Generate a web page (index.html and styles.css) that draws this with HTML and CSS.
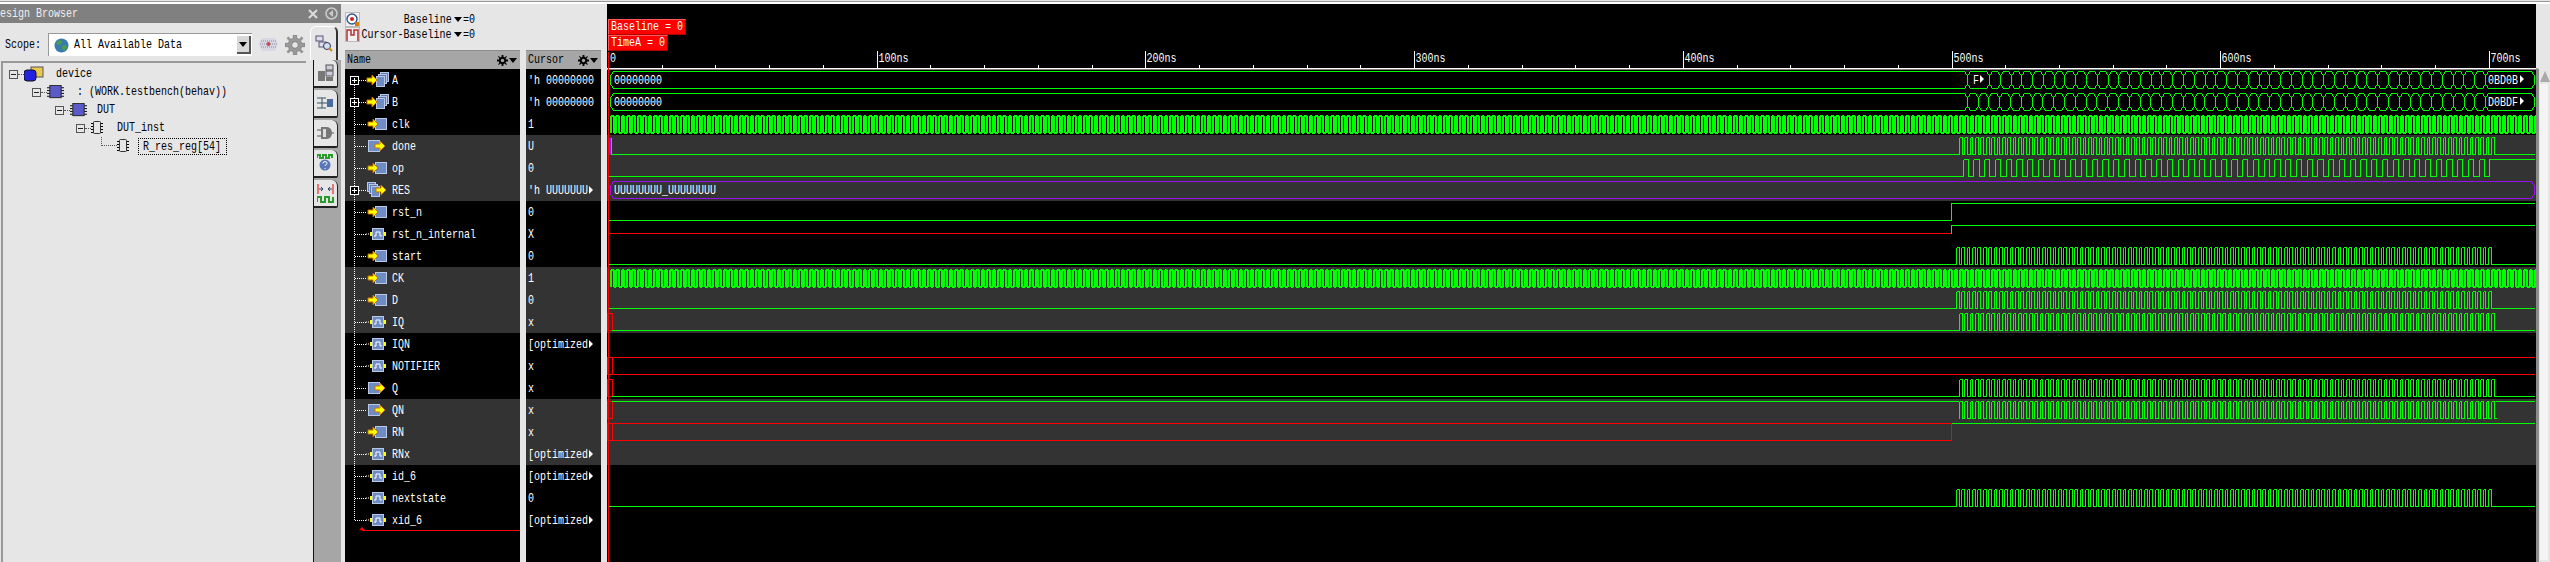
FILE: index.html
```html
<!DOCTYPE html>
<html lang="en">
<head>
    <meta charset="UTF-8">
    <title>Waveform viewer</title>
    <link rel="stylesheet" href="styles.css">
</head>
<body>
    <!-- Shared icons -->
    <svg class="defs" width="0" height="0">
        <symbol id="i-in" viewBox="0 0 24 16">
            <rect x="9.5" y="2.5" width="11" height="11" fill="#6f8cc4" stroke="#b9c8e6"/>
            <path d="M2 6h5V3l5 5-5 5v-3H2z" fill="#ff0" stroke="#c87000"/>
        </symbol>
        <symbol id="i-out" viewBox="0 0 24 16">
            <rect x="2.5" y="2.5" width="11" height="11" fill="#6f8cc4" stroke="#b9c8e6"/>
            <path d="M9 6h5V3l5 5-5 5v-3H9z" fill="#ff0" stroke="#c87000"/>
        </symbol>
        <symbol id="i-bus-in" viewBox="0 0 24 16">
            <rect x="14.5" y=".5" width="8" height="9" fill="#5d78ac" stroke="#b9c8e6"/>
            <rect x="12.5" y="2.5" width="8" height="9" fill="#5d78ac" stroke="#b9c8e6"/>
            <rect x="10.5" y="4.5" width="8" height="10" fill="#6f8cc4" stroke="#b9c8e6"/>
            <path d="M1 6h5V3l5 5-5 5v-3H1z" fill="#ff0" stroke="#c87000"/>
        </symbol>
        <symbol id="i-bus-out" viewBox="0 0 24 16">
            <rect x="1.5" y=".5" width="8" height="9" fill="#5d78ac" stroke="#b9c8e6"/>
            <rect x="3.5" y="2.5" width="8" height="9" fill="#5d78ac" stroke="#b9c8e6"/>
            <rect x="5.5" y="4.5" width="8" height="10" fill="#6f8cc4" stroke="#b9c8e6"/>
            <path d="M10 6h5V3l5 5-5 5v-3h-5z" fill="#ff0" stroke="#c87000"/>
        </symbol>
        <symbol id="i-net" viewBox="0 0 24 16">
            <path d="M0 8h4" stroke="#fff" stroke-dasharray="1 1"/>
            <rect x="4" y="6" width="2" height="4" fill="#ff0"/>
            <rect x="18" y="6" width="2" height="4" fill="#ff0"/>
            <rect x="6.5" y="2.5" width="11" height="11" fill="#6f8cc4" stroke="#b9c8e6"/>
            <path d="M8 10h2V6h4v4h2" fill="none" stroke="#fff"/>
        </symbol>
        <symbol id="i-gear" viewBox="0 0 12 12">
            <path d="M5 0h2v2l1.500.6L10 1.200 10.800 2 9.400 3.500 10 5h2v2h-2l-.6 1.500L10.800 10l-.8.800-1.500-1.400L7 10v2H5v-2l-1.500-.6L2 10.800 1.200 10l1.400-1.500L2 7H0V5h2l.6-1.500L1.200 2 2 1.200l1.500 1.400L5 2z" fill="#000"/>
            <circle cx="6" cy="6" r="1.800" fill="#a6a6a6"/>
        </symbol>
        <symbol id="i-chip" viewBox="0 0 18 14">
            <path d="M0 2.500h18M0 5.500h18M0 8.500h18M0 11.500h18" stroke="#000"/>
            <rect x="3" y="0" width="12" height="13" fill="#5a5ac8" stroke="#222"/>
        </symbol>
        <symbol id="i-inst" viewBox="0 0 12 14">
            <path d="M0 2.500h12M0 5.500h12M0 8.500h12M0 11.500h12" stroke="#000"/>
            <rect x="2.500" y=".5" width="7" height="12" rx="1" fill="#e6e6e6" stroke="#333"/>
        </symbol>
    </svg>

    <div class="top-strip"></div>

    <div class="app">
        <!-- Design browser -->
        <section class="browser">
            <header class="title-bar">
                <span class="t">esign Browser</span>
                <span class="title-btns">
                    <svg width="12" height="12" viewBox="0 0 12 12"><path d="M2 2l8 8M10 2l-8 8" stroke="#ddd" stroke-width="2"/></svg>
                    <svg width="13" height="13" viewBox="0 0 13 13"><circle cx="6.500" cy="6.500" r="5.500" fill="none" stroke="#ccc" stroke-width="1.500"/><path d="M8 3v7L4 6.500z" fill="#ccc"/></svg>
                </span>
            </header>
            <div class="browser-body">
                <div class="browser-main">
                    <div class="scope-row">
                        <span class="t scope-label">Scope:</span>
                        <div class="scope-select">
                            <svg width="15" height="15" viewBox="0 0 15 15"><circle cx="7.500" cy="7.500" r="7" fill="#3a7ab0"/><path d="M2 5l3-3 3 1-1 3-3 1zM8 8l4-1 1 3-3 3-2-2z" fill="#4aa04a"/></svg>
                            <span class="t select-text">All Available Data</span>
                            <span class="select-btn"><i class="caret"></i></span>
                        </div>
                        <svg class="scope-icon" width="19" height="15" viewBox="0 0 19 15"><path d="M3 1h13l3 6-3 7H3L0 7z" fill="#d8d8e4"/><path d="M2 4h15M1 7h17M2 10h15" stroke="#8a8aa0" stroke-dasharray="1 1"/><circle cx="9.500" cy="7" r="2" fill="#c84a4a"/></svg>
                        <svg class="scope-icon" width="20" height="20" viewBox="0 0 12 12"><path d="M5 0h2v2l1.500.6L10 1.200 10.800 2 9.400 3.500 10 5h2v2h-2l-.6 1.500L10.800 10l-.8.800-1.500-1.400L7 10v2H5v-2l-1.500-.6L2 10.800 1.200 10l1.400-1.500L2 7H0V5h2l.6-1.500L1.200 2 2 1.200l1.500 1.400L5 2z" fill="#999" stroke="#777" stroke-width=".4"/><circle cx="6" cy="6" r="2" fill="#e6e6e6" stroke="#777" stroke-width=".5"/></svg>
                    </div>
                    <div class="tree">
                        <div class="tree-row depth-0">
                            <i class="minus"></i><i class="twig"></i>
                            <svg class="node-icon drop" width="20" height="16" viewBox="0 0 20 16"><rect x="7" y="1" width="12" height="10" fill="#e8c850" stroke="#555"/><rect x="0" y="4" width="12" height="11" rx="3" fill="#2222e0" stroke="#111"/></svg>
                            <span class="t node-text device-text">device</span>
                        </div>
                        <div class="tree-row depth-1">
                            <i class="minus"></i><i class="twig"></i>
                            <svg class="node-icon" width="17" height="14"><use href="#i-chip"/></svg>
                            <span class="t node-text top-text">:  (WORK.testbench(behav))</span>
                        </div>
                        <div class="tree-row depth-2">
                            <i class="minus"></i><i class="twig"></i>
                            <svg class="node-icon" width="17" height="14"><use href="#i-chip"/></svg>
                            <span class="t node-text">DUT</span>
                        </div>
                        <div class="tree-row depth-3">
                            <i class="minus"></i><i class="twig"></i>
                            <svg class="node-icon" width="12" height="14"><use href="#i-inst"/></svg>
                            <span class="t node-text inst-text">DUT_inst</span>
                        </div>
                        <div class="tree-row depth-4">
                            <i class="twig twig-leaf"></i>
                            <svg class="node-icon" width="12" height="14"><use href="#i-inst"/></svg>
                            <span class="selected"><span class="t node-text">R_res_reg[54]</span></span>
                        </div>
                    </div>
                </div>
                <nav class="tabs">
                    <div class="tab-active">
                        <svg width="18" height="18" viewBox="0 0 18 18"><rect x="1" y="1" width="7" height="5" fill="#dde" stroke="#557"/><rect x="4" y="7" width="7" height="5" fill="#dde" stroke="#557"/><circle cx="12" cy="11" r="3.500" fill="#cfe0f0" stroke="#335"/><path d="M14 13l3 3" stroke="#c80" stroke-width="2"/></svg>
                    </div>
                    <div class="tab-list">
                        <div class="tab"><svg width="17" height="18" viewBox="0 0 17 18"><rect x="9" y="1" width="7" height="5" fill="#ccd" stroke="#555"/><rect x="9" y="7" width="7" height="5" fill="#ccd" stroke="#555"/><rect x="1" y="7" width="7" height="10" fill="#777"/><rect x="9" y="13" width="7" height="4" fill="#777"/></svg></div>
                        <div class="tab"><svg width="17" height="16" viewBox="0 0 17 16"><path d="M0 3h9M0 8h11M0 13h9M5 3v10" stroke="#356" fill="none"/><rect x="10" y="4" width="6" height="8" fill="#4a6aa0"/></svg></div>
                        <div class="tab"><svg width="17" height="14" viewBox="0 0 17 14"><path d="M0 4h4M0 10h4M14 7h3" stroke="#555"/><path d="M4 1h6a5 6 0 010 12H4z" fill="#777"/><rect x="6" y="3" width="3" height="8" fill="#ddd"/></svg></div>
                        <div class="tab"><svg width="17" height="18" viewBox="0 0 17 18"><path d="M0 4V1h3v3h3V1h3v3h3V1h3v3" fill="none" stroke="#2a9a2a" stroke-width="2"/><circle cx="8" cy="11" r="5.500" fill="#5a78b8"/><path d="M6 9.500a2 2 0 114 0c0 1.500-2 1-2 2.500M8 14v1" fill="none" stroke="#fff"/></svg></div>
                        <div class="tab"><svg width="17" height="20" viewBox="0 0 17 20"><path d="M1 1v10M16 1v10" stroke="#e00"/><path d="M2 6h4M4 4l2 2-2 2M15 6h-4M13 4l-2 2 2 2" fill="none" stroke="#246"/><path d="M0 19v-5h4v5h4v-5h4v5h4v-5" fill="none" stroke="#2a9a2a" stroke-width="2"/></svg></div>
                    </div>
                </nav>
            </div>
        </section>

        <!-- Signal list -->
        <section class="signals">
            <div class="time-info">
                <div class="info-row">
                    <span class="icon-btn"><svg width="13" height="13" viewBox="0 0 13 13"><circle cx="6" cy="6" r="5" fill="#fff" stroke="#3a5a90" stroke-width="1.500"/><circle cx="6" cy="6" r="2" fill="#d02020"/><rect x="9" y="9" width="4" height="4" fill="#d08000"/></svg></span>
                    <span class="info-label"><span class="t t-right">Baseline</span></span>
                    <i class="caret"></i>
                    <span class="t info-value">=0</span>
                </div>
                <div class="info-row">
                    <span class="icon-btn"><svg width="13" height="13" viewBox="0 0 13 13"><path d="M1 13V2h4v5h3V2h4v11" fill="none" stroke="#b03030" stroke-width="1.500"/></svg></span>
                    <span class="info-label"><span class="t t-right">Cursor-Baseline</span></span>
                    <i class="caret"></i>
                    <span class="t info-value">=0</span>
                </div>
            </div>
            <div class="columns">
                <div class="name-col">
                    <div class="col-head">
                        <span class="t">Name</span>
                        <span class="head-tools"><svg width="11" height="11"><use href="#i-gear"/></svg><i class="caret"></i></span>
                    </div>
                    <div class="name-rows">
                        <i class="guide"></i>
                        <div class="row"><i class="plus"></i><i class="twig-short"></i><svg class="sig" width="24" height="16"><use href="#i-bus-in"/></svg><span class="t">A</span></div>
                        <div class="row"><i class="plus"></i><i class="twig-short"></i><svg class="sig" width="24" height="16"><use href="#i-bus-in"/></svg><span class="t">B</span></div>
                        <div class="row"><i class="twig-long"></i><svg class="sig" width="24" height="16"><use href="#i-in"/></svg><span class="t">clk</span></div>
                        <div class="row dark"><i class="twig-long"></i><svg class="sig" width="24" height="16"><use href="#i-out"/></svg><span class="t">done</span></div>
                        <div class="row dark"><i class="twig-long"></i><svg class="sig" width="24" height="16"><use href="#i-in"/></svg><span class="t">op</span></div>
                        <div class="row dark"><i class="plus"></i><i class="twig-short"></i><svg class="sig" width="24" height="16"><use href="#i-bus-out"/></svg><span class="t">RES</span></div>
                        <div class="row"><i class="twig-long"></i><svg class="sig" width="24" height="16"><use href="#i-in"/></svg><span class="t">rst_n</span></div>
                        <div class="row"><i class="twig-long"></i><svg class="sig" width="24" height="16"><use href="#i-net"/></svg><span class="t">rst_n_internal</span></div>
                        <div class="row"><i class="twig-long"></i><svg class="sig" width="24" height="16"><use href="#i-in"/></svg><span class="t">start</span></div>
                        <div class="row dark"><i class="twig-long"></i><svg class="sig" width="24" height="16"><use href="#i-in"/></svg><span class="t">CK</span></div>
                        <div class="row dark"><i class="twig-long"></i><svg class="sig" width="24" height="16"><use href="#i-in"/></svg><span class="t">D</span></div>
                        <div class="row dark"><i class="twig-long"></i><svg class="sig" width="24" height="16"><use href="#i-net"/></svg><span class="t">IQ</span></div>
                        <div class="row"><i class="twig-long"></i><svg class="sig" width="24" height="16"><use href="#i-net"/></svg><span class="t">IQN</span></div>
                        <div class="row"><i class="twig-long"></i><svg class="sig" width="24" height="16"><use href="#i-net"/></svg><span class="t">NOTIFIER</span></div>
                        <div class="row"><i class="twig-long"></i><svg class="sig" width="24" height="16"><use href="#i-out"/></svg><span class="t">Q</span></div>
                        <div class="row dark"><i class="twig-long"></i><svg class="sig" width="24" height="16"><use href="#i-out"/></svg><span class="t">QN</span></div>
                        <div class="row dark"><i class="twig-long"></i><svg class="sig" width="24" height="16"><use href="#i-in"/></svg><span class="t">RN</span></div>
                        <div class="row dark"><i class="twig-long"></i><svg class="sig" width="24" height="16"><use href="#i-net"/></svg><span class="t">RNx</span></div>
                        <div class="row"><i class="twig-long"></i><svg class="sig" width="24" height="16"><use href="#i-net"/></svg><span class="t">id_6</span></div>
                        <div class="row"><i class="twig-long"></i><svg class="sig" width="24" height="16"><use href="#i-net"/></svg><span class="t">nextstate</span></div>
                        <div class="row"><i class="twig-long"></i><svg class="sig" width="24" height="16"><use href="#i-net"/></svg><span class="t">xid_6</span></div>
                        <i class="drop-line"></i>
                    </div>
                </div>
                <div class="val-col">
                    <div class="col-head">
                        <span class="t">Cursor</span>
                        <span class="head-tools"><svg width="11" height="11"><use href="#i-gear"/></svg><i class="caret"></i></span>
                    </div>
                    <div class="val-rows">
                        <div class="val"><span class="t">'h 00000000</span></div>
                        <div class="val"><span class="t">'h 00000000</span></div>
                        <div class="val"><span class="t">1</span></div>
                        <div class="val dark"><span class="t">U</span></div>
                        <div class="val dark"><span class="t">0</span></div>
                        <div class="val dark"><span class="t cut">'h UUUUUUU</span><i class="more"></i></div>
                        <div class="val"><span class="t">0</span></div>
                        <div class="val"><span class="t">X</span></div>
                        <div class="val"><span class="t">0</span></div>
                        <div class="val dark"><span class="t">1</span></div>
                        <div class="val dark"><span class="t">0</span></div>
                        <div class="val dark"><span class="t">x</span></div>
                        <div class="val"><span class="t cut">[optimized</span><i class="more"></i></div>
                        <div class="val"><span class="t">x</span></div>
                        <div class="val"><span class="t">x</span></div>
                        <div class="val dark"><span class="t">x</span></div>
                        <div class="val dark"><span class="t">x</span></div>
                        <div class="val dark"><span class="t cut">[optimized</span><i class="more"></i></div>
                        <div class="val"><span class="t cut">[optimized</span><i class="more"></i></div>
                        <div class="val"><span class="t">0</span></div>
                        <div class="val"><span class="t cut">[optimized</span><i class="more"></i></div>
                    </div>
                </div>
            </div>
        </section>

        <!-- Waveforms, drawn by script.js -->
        <section class="wave-pane">
            <svg id="wave" class="wave" width="1929" height="558" viewBox="607 4 1929 558"></svg>
            <div class="markers">
                <div class="marker"><span class="t">Baseline = 0</span></div>
                <div class="marker marker-a"><span class="t">TimeA = 0</span></div>
            </div>
        </section>

        <!-- Vertical scrollbar -->
        <aside class="scrollbar">
            <div class="scroll-btn"><i class="scroll-up"></i></div>
            <div class="scroll-thumb"></div>
        </aside>
    </div>

    <script src="script.js"></script>
</body>
</html>
```

FILE: styles.css
```css
/* General */
* {
    margin: 0;
    padding: 0;
    box-sizing: border-box;
}

body {
    width: 2550px;
    height: 562px;
    overflow: hidden;
    background: #e6e6e6;
    font-family: "Liberation Mono", monospace;
    font-size: 13.5px;
    color: #fff;
}

i {
    display: block;
    flex: none;
}

.defs {
    position: absolute;
}

/* The screen font is tall and narrow: 6px per character */
.t {
    display: inline-block;
    white-space: nowrap;
    line-height: 16px;
    transform: scaleX(0.74);
    transform-origin: 0 50%;
}

.t-right {
    transform-origin: 100% 50%;
}

.caret {
    width: 0;
    height: 0;
    border-left: 4px solid transparent;
    border-right: 4px solid transparent;
    border-top: 5px solid #000;
}

.top-strip {
    height: 4px;
    background: #fff;
    border-top: 1px solid #e6e6e6;
    box-shadow: inset 0 1px 0 #999;
}

.app {
    display: flex;
    height: 558px;
}

/* Design browser */
.browser {
    width: 341px;
    display: flex;
    flex-direction: column;
    flex: none;
    color: #000;
}

.title-bar {
    height: 19px;
    background: #808080;
    color: #f0f0f0;
    display: flex;
    align-items: center;
    justify-content: space-between;
    overflow: hidden;
}

.title-btns {
    display: flex;
    align-items: center;
    gap: 6px;
    padding-right: 3px;
}

.browser-body {
    flex: 1;
    display: flex;
    min-height: 0;
}

.browser-main {
    width: 310px;
    flex: none;
    display: flex;
    flex-direction: column;
}

.scope-row {
    height: 38px;
    display: flex;
    align-items: center;
    padding: 5px 0 0 5px;
}

.scope-label {
    width: 43px;
}

.scope-select {
    width: 204px;
    height: 23px;
    background: #fff;
    border-top: 1px solid #999;
    border-left: 1px solid #999;
    display: flex;
    align-items: center;
    padding-left: 5px;
}

.select-text {
    margin-left: 5px;
    width: 163px;
}

.select-btn {
    width: 14px;
    height: 18px;
    background: #d8d8d8;
    border-right: 2px solid #555;
    border-bottom: 2px solid #555;
    display: flex;
    align-items: center;
    justify-content: center;
}

.scope-icon {
    margin-left: 7px;
    flex: none;
}

.tree {
    flex: 1;
    margin-left: 1px;
    margin-right: 4px;
    border-top: 2px solid #999;
    border-left: 2px solid #999;
    padding-top: 2px;
}

.tree-row {
    height: 18px;
    display: flex;
    align-items: center;
}

.depth-0 { padding-left: 6px; }
.depth-1 { padding-left: 29px; }
.depth-2 { padding-left: 52px; }
.depth-3 { padding-left: 73px; }
.depth-4 { padding-left: 98px; }

.minus {
    width: 9px;
    height: 9px;
    border: 1px solid #555;
    background: linear-gradient(#222, #222) center / 5px 1px no-repeat;
}

.twig {
    width: 6px;
    border-top: 1px dotted #555;
}

.twig-leaf {
    width: 16px;
    height: 9px;
    margin-top: -9px;
    border-top: 0;
    border-left: 1px dotted #555;
    border-bottom: 1px dotted #555;
}

.node-icon {
    flex: none;
}

.node-text {
    margin-left: 10px;
}

.device-text {
    margin-left: 12px;
}

.top-text {
    margin-left: 13px;
}

.inst-text {
    margin-left: 14px;
}

.selected {
    display: block;
    width: 89px;
    height: 17px;
    margin-left: 9px;
    border: 1px dotted #000;
}

.selected .node-text {
    margin-left: 4px;
    line-height: 15px;
    vertical-align: top;
}

/* Side tabs */
.tabs {
    width: 31px;
    flex: none;
    display: flex;
    flex-direction: column;
}

.tab-active {
    height: 34px;
    margin-top: 3px;
    width: 28px;
    background: #e6e6e6;
    border-top: 1px solid #fff;
    border-left: 1px solid #fff;
    border-right: 2px solid #333;
    border-radius: 6px 6px 0 0;
    display: flex;
    align-items: center;
    justify-content: center;
}

.tab-list {
    flex: 1;
    margin-left: 3px;
    background: #a6a6a6;
    border-left: 1px solid #111;
    display: flex;
    flex-direction: column;
    gap: 2px;
}

.tab {
    width: 24px;
    height: 28px;
    background: #e6e6e6;
    border-right: 1px solid #222;
    border-bottom: 2px solid #222;
    border-radius: 0 6px 2px 0;
    display: flex;
    align-items: center;
    justify-content: center;
}

/* Signal list */
.signals {
    width: 266px;
    flex: none;
    display: flex;
    flex-direction: column;
    color: #000;
}

.time-info {
    height: 46px;
    padding: 8px 0 0 4px;
}

.info-row {
    height: 15px;
    display: flex;
    align-items: center;
}

.icon-btn {
    width: 15px;
    height: 15px;
    background: #f0f0f0;
    border: 1px solid #bbb;
    display: flex;
    align-items: center;
    justify-content: center;
}

.info-label {
    width: 92px;
    display: flex;
    justify-content: flex-end;
}

.info-row .caret {
    margin: 0 1px 0 2px;
}

.col-head {
    height: 19px;
    background: #a6a6a6;
    border-top: 1px solid #8c8c8c;
    display: flex;
    align-items: center;
    justify-content: space-between;
    padding-left: 2px;
    overflow: hidden;
}

.head-tools {
    display: flex;
    align-items: center;
    gap: 1px;
    padding-right: 3px;
}

.columns {
    flex: 1;
    display: flex;
    gap: 6px;
    padding-left: 4px;
    min-height: 0;
}

.name-col {
    width: 175px;
    flex: none;
    display: flex;
    flex-direction: column;
}

.val-col {
    width: 75px;
    flex: none;
    display: flex;
    flex-direction: column;
}

.name-rows,
.val-rows {
    flex: 1;
    background: #000;
    color: #fff;
    position: relative;
}

.row,
.val {
    height: 22px;
    display: flex;
    align-items: center;
}

.row {
    padding-left: 5px;
}

.val {
    padding-left: 2px;
}

.row .t,
.val .t {
    margin-top: 2px;
}

.dark {
    background: #333;
}

.guide {
    position: absolute;
    left: 9px;
    top: 11px;
    height: 440px;
    border-left: 1px dotted #fff;
}

.plus {
    width: 9px;
    height: 9px;
    border: 1px solid #fff;
    background:
        linear-gradient(#fff, #fff) center / 5px 1px no-repeat,
        linear-gradient(#fff, #fff) center / 1px 5px no-repeat,
        #000;
    position: relative;
}

.twig-short {
    width: 7px;
    border-top: 1px dotted #fff;
}

.twig-long {
    width: 11px;
    margin-left: 5px;
    border-top: 1px dotted #fff;
}

.sig {
    flex: none;
    margin-right: 2px;
}

.cut {
    width: 61px;
}

.more {
    width: 0;
    height: 0;
    border-top: 4px solid transparent;
    border-bottom: 4px solid transparent;
    border-left: 4px solid #fff;
}

.drop-line {
    position: absolute;
    left: 17px;
    right: 0;
    top: 461px;
    height: 1px;
    background: #f00;
}

.drop-line::before {
    content: "";
    position: absolute;
    left: -3px;
    top: -3px;
    border-left: 3px solid transparent;
    border-right: 3px solid transparent;
    border-bottom: 3px solid #f00;
}

/* Waveforms */
.wave-pane {
    width: 1929px;
    flex: none;
    position: relative;
    background: #000;
}

.wave {
    display: block;
}

.wave text {
    font-family: "Liberation Mono", monospace;
    font-size: 13.5px;
    fill: #fff;
}

.markers {
    position: absolute;
    left: 1px;
    top: 15px;
}

.marker {
    width: 78px;
    height: 16px;
    background: #f00;
    border-top: 1px solid #ff5a5a;
    border-left: 1px solid #ff5a5a;
    border-right: 1px solid #b00000;
    border-bottom: 1px solid #b00000;
    padding-left: 2px;
    line-height: 14px;
}

.marker .t {
    line-height: 14px;
    vertical-align: top;
}

.marker-a {
    width: 60px;
}

/* Scrollbar */
.scrollbar {
    flex: 1;
    margin-top: 64px;
    border-left: 3px solid #8c8c8c;
    border-top: 1px solid #e6e6e6;
}

.scroll-btn {
    height: 13px;
    margin-top: 2px;
    display: flex;
    justify-content: center;
}

.scroll-up {
    width: 0;
    height: 0;
    border-left: 5px solid transparent;
    border-right: 5px solid transparent;
    border-bottom: 11px solid #aaa;
}

.scroll-thumb {
    width: 8px;
    height: 476px;
    margin-left: 1px;
    background: #f4f4f4;
}
```

FILE: script.js
```js
// Draws the ruler and all signal traces into the wave svg
const X0 = 608;            // x of time 0
const NS = 2.687;          // pixels per ns
const XEND = 2535;         // right end of the traces
const GREEN = "#00ff00";
const RED = "#ff0000";
const PURPLE = "#9a10f0";

const svg = document.getElementById("wave");
let out = "";

function rowTop(i) { return 69 + 22 * i; }
function hi(i) { return rowTop(i) + 2.5; }
function lo(i) { return rowTop(i) + 19.5; }
function px(x) { return Math.round(x) + 0.5; }

function path(d, color, width) {
    out += `<path d="${d}" fill="none" stroke="${color}" stroke-width="${width || 1}" shape-rendering="crispEdges"/>`;
}

function label(str, x, y) {
    out += `<text x="${x}" y="${y}" textLength="${str.length * 6}" lengthAdjust="spacingAndGlyphs">${str}</text>`;
}

function more(x, y) {
    out += `<polygon points="${x},${y - 4} ${x + 4},${y} ${x},${y + 4}" fill="#fff"/>`;
}

// square wave between x1 and x2, half = half period in px
function pulses(i, x1, x2, half, width) {
    let d = "";
    let high = false;
    for (let n = 0; x1 + n * half < x2; n++) {
        const x = px(x1 + n * half);
        d += `M${x} ${hi(i)}V${lo(i)}`;
        high = !high;
        const y = high ? hi(i) : lo(i);
        d += `M${x} ${y}H${px(x1 + (n + 1) * half)}`;
    }
    path(d, GREEN, width);
}

// one value box of a bus
function busCell(i, x1, x2, color) {
    const mid = rowTop(i) + 11;
    const a = px(x1);
    const b = px(x2);
    path(`M${a} ${mid - 4}L${a + 3} ${hi(i)}H${b - 3}L${b} ${mid - 4}V${mid + 4}L${b - 3} ${lo(i)}H${a + 3}L${a} ${mid + 4}Z`, color);
}

function redBox(i) {
    out += `<rect x="607" y="${hi(i)}" width="2" height="17" fill="${RED}"/>`;
    path(`M607 ${hi(i)}H612V${lo(i)}H607`, RED);
}

// row bands
[3, 9, 15].forEach(i => {
    out += `<rect x="607" y="${rowTop(i)}" width="1929" height="66" fill="#333"/>`;
});

// ruler
out += `<rect x="607" y="68" width="1929" height="1.5" fill="#fff"/>`;
for (let t = 20; t <= 700; t += 20) {
    const x = px(X0 + t * NS);
    if (t % 100 === 0) {
        path(`M${x} 51V68`, "#fff");
        label(t + "ns", x + 1, 62);
    } else {
        path(`M${x} 65V68`, "#fff");
    }
}
label("0", 610, 62);

// A, B
const busEnd = 2485;
busCell(0, 610, 1966.7, GREEN);
busCell(0, 1966.7, 1989, GREEN);
for (let n = 0; n < 46; n++) {
    busCell(0, 1989 + n * 10.78, 1989 + (n + 1) * 10.78, GREEN);
}
busCell(0, busEnd, 2534, GREEN);
label("00000000", 614, 84);
label("F", 1973, 84);
more(1980, 79);
label("0BD0B", 2488, 84);
more(2520, 79);

busCell(1, 610, 1966.7, GREEN);
for (let n = 0; n < 48; n++) {
    busCell(1, 1966.7 + n * 10.8, 1966.7 + (n + 1) * 10.8, GREEN);
}
busCell(1, busEnd, 2534, GREEN);
label("00000000", 614, 106);
label("D0BDF", 2488, 106);
more(2520, 101);

// clk, CK
pulses(2, 610, XEND, NS, 2);
pulses(9, 610, XEND, NS, 2);

// done
out += `<rect x="608" y="${hi(3)}" width="3" height="17" fill="${PURPLE}"/>`;
path(`M611.5 ${hi(3)}V${lo(3)}H1959`, GREEN);
pulses(3, 1959, 2495, NS);
path(`M2495.5 ${lo(3)}H${XEND}`, GREEN);

// op
path(`M608 ${lo(4)}H1963`, GREEN);
pulses(4, 1962.6, 2489, NS * 2);
path(`M2489.5 ${lo(4)}V${hi(4)}H${XEND}`, GREEN);

// RES
busCell(5, 610, 2534, PURPLE);
label("UUUUUUUU_UUUUUUUU", 614, 194);

// rst_n
path(`M608 ${lo(6)}H1951.5V${hi(6)}H${XEND}`, GREEN);

// rst_n_internal
path(`M608 ${rowTop(7) + 10.5}H1951.5`, RED);
path(`M1951.5 ${rowTop(7) + 10.5}V${hi(7)}H${XEND}`, GREEN);

// start, D, nextstate
[8, 10, 19].forEach(i => {
    path(`M608 ${lo(i)}H1956`, GREEN);
    pulses(i, 1956, 2492, NS);
    path(`M2492.5 ${lo(i)}H${XEND}`, GREEN);
});

// IQ, Q
[11, 14].forEach(i => {
    redBox(i);
    path(`M612 ${lo(i)}H1959`, GREEN);
    pulses(i, 1959, 2495, NS);
    path(`M2495.5 ${lo(i)}H${XEND}`, GREEN);
});

// QN
redBox(15);
path(`M612 ${hi(15)}H1959`, GREEN);
pulses(15, 1959, 2495, NS);
path(`M2495.5 ${hi(15)}H${XEND}`, GREEN);

// NOTIFIER
redBox(13);
path(`M608 ${hi(13)}H${XEND}M608 ${lo(13)}H${XEND}`, RED);

// RN
redBox(16);
path(`M608 ${hi(16)}H1951.5M608 ${lo(16)}H1951.5V${hi(16)}`, RED);
path(`M1951.5 ${hi(16)}H${XEND}`, GREEN);

// cursor line
out += `<rect x="608" y="52" width="1" height="510" fill="${RED}"/>`;

svg.innerHTML = out;
```
